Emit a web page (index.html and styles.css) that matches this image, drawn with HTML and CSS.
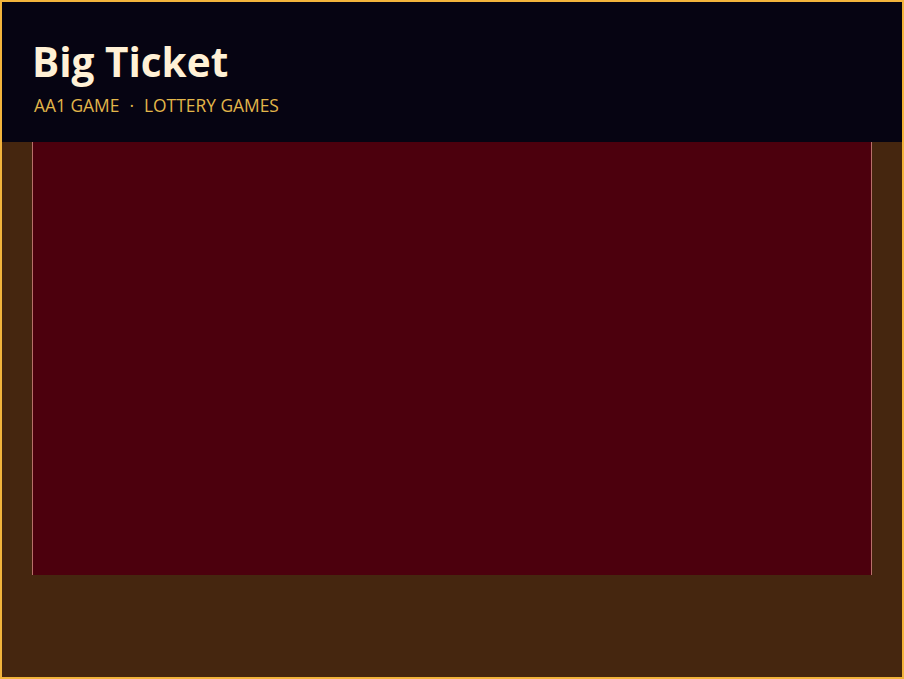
FILE: index.html
```html
<!DOCTYPE html>
<html lang="en">
<head>
<meta charset="utf-8">
<title>Big Ticket</title>
<link rel="stylesheet" href="styles.css">
</head>
<body>
<div class="frame">
  <header class="header">
    <h1 class="title">Big Ticket</h1>
    <p class="crumbs"><span>AA1 GAME</span><span class="dot">·</span><span>LOTTERY GAMES</span></p>
  </header>
  <main class="main">
    <div class="stage"></div>
  </main>
</div>
</body>
</html>
```

FILE: styles.css
```css
html, body {
  margin: 0;
  padding: 0;
  height: 100%;
}
body {
  background: #45260f;
  font-family: "Open Sans", "Noto Sans", sans-serif;
}
.frame {
  box-sizing: border-box;
  height: 100vh;
  border: 2px solid #f2b43c;
  background: #45260f;
  display: flex;
  flex-direction: column;
}
.header {
  background: #060412;
  height: 140px;
  box-sizing: border-box;
  padding: 34px 32px 0;
}
.title {
  margin: 0 0 0 -2px;
  font-size: 40.5px;
  line-height: 52px;
  font-weight: 700;
  color: #fff1d6;
  letter-spacing: 0;
}
.crumbs {
  margin: 6px 0 0;
  font-size: 17.4px;
  line-height: 22px;
  color: #e2b64a;
  display: flex;
  gap: 10px;
}
.main {
  padding: 0 30px;
}
.stage {
  height: 433px;
  background: #4c000d;
  border-left: 1px solid #b8706a;
  border-right: 1px solid #b8706a;
}
```
